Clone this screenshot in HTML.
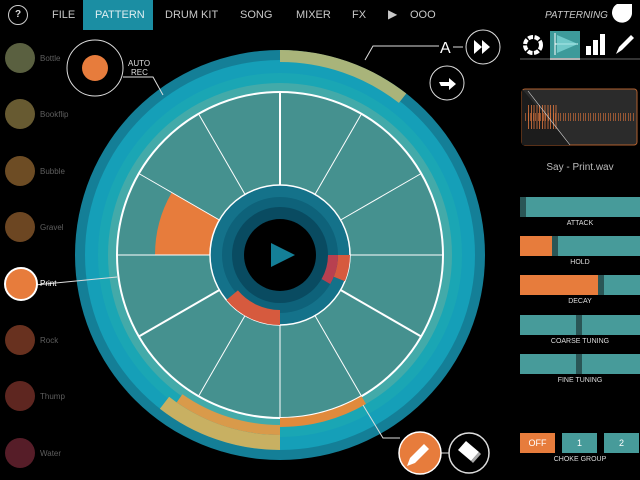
<!DOCTYPE html>
<html><head><meta charset="utf-8"><style>
body{margin:0;width:640px;height:480px;background:#000;overflow:hidden;font-family:"Liberation Sans",sans-serif;position:relative}
.t{position:absolute;color:#c8c8c8;font-size:11px;top:9px}
.pad{position:absolute;left:5px;width:30px;height:30px;border-radius:50%}
.pl{position:absolute;left:40px;font-size:8px;color:#5e5e5e}
.sl{position:absolute;left:520px;width:120px;height:20px;background:#479b9a}
.h{position:absolute;top:0;width:6px;height:20px;background:#2a5656}
.o{position:absolute;left:0;top:0;height:20px;background:#e77c3c}
.lb{position:absolute;width:120px;left:520px;text-align:center;font-size:7px;color:#ddd}
.cb{position:absolute;top:433px;width:35px;height:20px;background:#479b9a;color:#fff;font-size:9px;text-align:center;line-height:20px}
</style></head><body>
<div style="position:absolute;left:83px;top:0;width:70px;height:30px;background:#1b8ea3"></div>
<div style="position:absolute;left:8px;top:5px;width:18px;height:18px;border:1.5px solid #ccc;border-radius:50%;color:#ddd;font-size:10px;text-align:center;line-height:18px;font-weight:bold">?</div>
<div class="t" style="left:52px">FILE</div>
<div class="t" style="left:95px;color:#dfeff2">PATTERN</div>
<div class="t" style="left:165px">DRUM KIT</div>
<div class="t" style="left:240px">SONG</div>
<div class="t" style="left:296px">MIXER</div>
<div class="t" style="left:352px">FX</div>
<div class="t" style="left:388px;font-size:12px;top:7px">▶</div>
<div class="t" style="left:410px">OOO</div>
<div class="t" style="left:545px;font-style:italic;font-size:10px;top:10px">PATTERNING</div>
<svg width="640" height="480" style="position:absolute;left:0;top:0">
<path d="M617,4 h15 a8,8 0 0 1 0,0 v8 a10,10 0 1 1 -15,-8z" fill="#fff"/>
<circle cx="533" cy="45" r="8" fill="none" stroke="#fff" stroke-width="4" stroke-dasharray="5 1.5"/>
<rect x="550" y="31" width="30" height="27" fill="#3d9a9a"/>
<rect x="550" y="58" width="30" height="2" fill="#fff"/>
<path d="M555,33 v22 M555,44 L578,44" stroke="#fff" stroke-width="1"/>
<path d="M557,35 L578,44 L557,53z" fill="#8dd" opacity=".7"/>
<rect x="586" y="46" width="5" height="9" fill="#fff"/><rect x="593" y="40" width="5" height="15" fill="#fff"/><rect x="600" y="34" width="5" height="21" fill="#fff"/>
<path d="M616,54 l3,-7 l12,-12 l3,3 l-12,12z" fill="#fff"/>
<line x1="520" y1="59" x2="640" y2="59" stroke="#666"/>
<rect x="522" y="89" width="115" height="56" rx="3" fill="#2b2b2b" stroke="#b0602f"/>
<path d="M522,89 L570,145 L522,145z" fill="#1c1c1c"/>
<path d="M525,117 h110" stroke="#c66a38" stroke-width="8" stroke-dasharray="1 2 1 1" opacity=".7"/>
<path d="M528,117 h30" stroke="#e07840" stroke-width="24" stroke-dasharray="1 2 1 1.5" opacity=".8"/>
<line x1="528" y1="91" x2="570" y2="145" stroke="#ddd" stroke-width=".6"/>
<circle cx="280" cy="255" r="205" fill="#147f97"/>
<circle cx="280" cy="255" r="195" fill="#159fb8"/>
<circle cx="280" cy="255" r="182" fill="#1aa6b4"/>
<circle cx="280" cy="255" r="172" fill="#43aaa9"/>
<circle cx="280" cy="255" r="163" fill="#45918f" stroke="#fff" stroke-width="2"/>
<path d="M280,50 A205 205 0 0 1 406.3,93.5 L398.9,102.9 A193 193 0 0 0 280,62 Z" fill="#a9b47a"/>
<path d="M280,450 A195 195 0 0 1 159.9,408.7 L169.1,396.8 A180 180 0 0 0 280,435 Z" fill="#c8b062"/>
<path d="M280,435 A180 180 0 0 1 176.7,402.4 L182.4,394.2 A170 170 0 0 0 280,425 Z" fill="#d99a4a"/>
<path d="M280,427 A172 172 0 0 0 366,404 L361.5,396.2 A163 163 0 0 1 280,418 Z" fill="#e08a3c"/>
<path d="M155,255 A125 125 0 0 1 171.75,192.5 L219.4,220 A70 70 0 0 0 210,255 Z" fill="#e77c3c"/>
<g stroke="#fff" stroke-width="1">
<line x1="280" y1="185" x2="280" y2="92" stroke-width="2"/>
<line x1="315" y1="194.4" x2="361.5" y2="113.8"/>
<line x1="340.6" y1="220" x2="421.2" y2="173.5"/>
<line x1="350" y1="255" x2="443" y2="255"/>
<line x1="340.6" y1="290" x2="421.2" y2="336.5" stroke-width="2"/>
<line x1="315" y1="315.6" x2="361.5" y2="396.2"/>
<line x1="280" y1="325" x2="280" y2="418"/>
<line x1="245" y1="315.6" x2="198.5" y2="396.2"/>
<line x1="219.4" y1="290" x2="138.8" y2="336.5" stroke-width="2"/>
<line x1="210" y1="255" x2="117" y2="255"/>
<line x1="219.4" y1="220" x2="138.8" y2="173.5"/>
<line x1="245" y1="194.4" x2="198.5" y2="113.8"/>
</g>
<circle cx="280" cy="255" r="70" fill="#14728a" stroke="#fff" stroke-width="1.5"/>
<circle cx="280" cy="255" r="58" fill="#0e627a"/>
<circle cx="280" cy="255" r="48" fill="#094b61"/>
<path d="M350,255 A70 70 0 0 1 344.9,281.2 L333.8,276.8 A58 58 0 0 0 338,255 Z" fill="#d65a3e"/>
<path d="M338,255 A58 58 0 0 1 330.2,284 L321.6,279 A48 48 0 0 0 328,255 Z" fill="#b84050"/>
<path d="M280,325 A70 70 0 0 1 226.4,300 L237.9,290.4 A55 55 0 0 0 280,310 Z" fill="#d65a3e"/>
<circle cx="280" cy="255" r="36" fill="#000"/>
<path d="M271,243 L295,255 L271,267z" fill="#147f97"/>
<g fill="none" stroke="#ddd" stroke-width="1">
<circle cx="95" cy="68" r="28"/>
<path d="M123,77 h30 l10,18"/>
<path d="M365,60 l8,-14 h66"/>
<path d="M453,47 h10"/>
<circle cx="483" cy="47" r="17"/>
<circle cx="447" cy="83" r="17"/>
<path d="M35,285 L117,277"/>
<path d="M363,405 l20,33 h17"/>
<path d="M440,453 h9"/>
<circle cx="469" cy="453" r="20" stroke-width="1.5"/>
</g>
<circle cx="95" cy="68" r="13" fill="#e77c3c"/>
<text x="128" y="66" fill="#ddd" font-size="8" font-family="Liberation Sans">AUTO</text>
<text x="131" y="75" fill="#ddd" font-size="8" font-family="Liberation Sans">REC</text>
<text x="440" y="53" fill="#fff" font-size="16" font-family="Liberation Sans">A</text>
<path d="M474,40 l8,7 l-8,7z M482,40 l8,7 l-8,7z" fill="#fff"/>
<path d="M439,82 h10 v-4 l7,6 l-7,6 v-4 h-8z" fill="#fff"/>
<circle cx="420" cy="453" r="21" fill="#e77c3c" stroke="#fff" stroke-width="1.5"/>
<path d="M407,466 l3,-8 l14,-14 l5,5 l-14,14z" fill="#fff"/>
<path d="M458,450 l8,-9 l13,11 l-8,9z" fill="#fff"/>
<path d="M471,461 l8,-9 l2,2 l-8,9z" fill="#aaa"/>
</svg>
<div class="pad" style="top:43px;background:#5a6040"></div><div class="pl" style="top:54px">Bottle</div>
<div class="pad" style="top:99px;background:#675a31"></div><div class="pl" style="top:110px">Bookflip</div>
<div class="pad" style="top:156px;background:#6d4c24"></div><div class="pl" style="top:167px">Bubble</div>
<div class="pad" style="top:212px;background:#6c4622"></div><div class="pl" style="top:223px">Gravel</div>
<div class="pad" style="top:267px;left:4px;background:#e77c3c;border:2px solid #fff"></div><div class="pl" style="top:279px;color:#fff">Print</div>
<div class="pad" style="top:325px;background:#68311f"></div><div class="pl" style="top:336px">Rock</div>
<div class="pad" style="top:381px;background:#5e2620"></div><div class="pl" style="top:392px">Thump</div>
<div class="pad" style="top:438px;background:#561d28"></div><div class="pl" style="top:449px">Water</div>
<div style="position:absolute;left:520px;width:120px;top:162px;text-align:center;color:#bbb;font-size:10px">Say - Print.wav</div>
<div class="sl" style="top:197px"><div class="h" style="left:0"></div></div><div class="lb" style="top:220px">ATTACK</div>
<div class="sl" style="top:236px"><div class="o" style="width:32px"></div><div class="h" style="left:32px"></div></div><div class="lb" style="top:259px">HOLD</div>
<div class="sl" style="top:275px"><div class="o" style="width:78px"></div><div class="h" style="left:78px"></div></div><div class="lb" style="top:298px">DECAY</div>
<div class="sl" style="top:315px"><div class="h" style="left:56px"></div></div><div class="lb" style="top:338px">COARSE TUNING</div>
<div class="sl" style="top:354px"><div class="h" style="left:56px"></div></div><div class="lb" style="top:377px">FINE TUNING</div>
<div class="cb" style="left:520px;background:#e77c3c">OFF</div>
<div class="cb" style="left:562px">1</div>
<div class="cb" style="left:604px">2</div>
<div class="lb" style="top:456px">CHOKE GROUP</div>
</body></html>
